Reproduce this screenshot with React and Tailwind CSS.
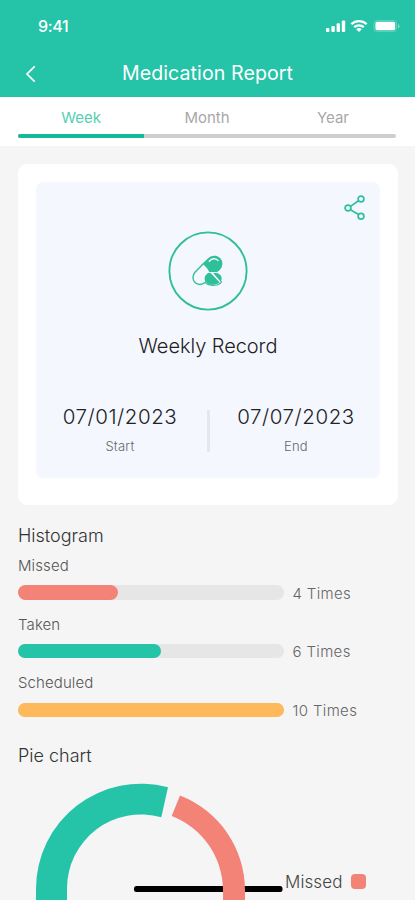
// App.jsx
import React from "react";

const tabs = ["Week", "Month", "Year"];

// fill is the width of the coloured part, in px, out of 266
const bars = [
  { label: "Missed", value: "4 Times", fill: 100, color: "bg-[#f38277]" },
  { label: "Taken", value: "6 Times", fill: 143, color: "bg-[#25c3a8]" },
  { label: "Scheduled", value: "10 Times", fill: 266, color: "bg-[#fdb95b]" },
];

function StatusBar() {
  return (
    <div className="flex h-[52px] items-center justify-between pl-[38px] pr-[14.5px] text-white">
      <span className="text-[16px] font-medium leading-none tracking-[-0.3px]">9:41</span>
      <svg width="76" height="16" viewBox="0 0 76 16" fill="currentColor">
        {/* signal */}
        <rect x="1" y="10" width="3.4" height="4" rx="1" />
        <rect x="6.4" y="8" width="3.4" height="6" rx="1" />
        <rect x="11.6" y="5.2" width="3.4" height="8.8" rx="1" />
        <rect x="16.8" y="2.4" width="3.4" height="11.6" rx="1" />
        {/* wifi */}
        <g fill="none" stroke="currentColor" strokeWidth="2.3">
          <path d="M26.3 6.2a11.2 11.2 0 0 1 15.4 0" />
          <path d="M29.2 9.2a7 7 0 0 1 9.6 0" />
        </g>
        <path d="M31.2 11.2a4.2 4.2 0 0 1 5.6 0L34 14z" />
        {/* battery */}
        <rect x="48.9" y="2.4" width="22.6" height="11.2" rx="3" fill="none" stroke="currentColor" strokeOpacity="0.25" />
        <rect x="50.4" y="3.8" width="19.8" height="8.4" rx="1.6" />
        <path d="M73 6v4.4a2.4 2.4 0 0 0 0-4.4z" opacity="0.45" />
      </svg>
    </div>
  );
}

function Header() {
  return (
    <header className="h-[97px] bg-[#25c3a8]">
      <StatusBar />
      <div className="flex h-[44px] items-center px-[24px] text-white">
        <svg width="14" height="18" viewBox="0 0 14 18" fill="none" stroke="currentColor" strokeWidth="1.7">
          <path d="M10.7 1.3 3 9l7.7 7.7" />
        </svg>
        <h1 className="flex-1 pr-[14px] text-center text-[19.6px] font-normal leading-none tracking-[0.08px]">
          Medication Report
        </h1>
      </div>
    </header>
  );
}

function Tabs() {
  return (
    <nav className="h-[49px] bg-white px-[18px]">
      <div className="grid h-[36.5px] w-[378px] grid-cols-3 pt-[12px]">
        {tabs.map((tab, i) => (
          <span
            key={tab}
            className={`text-center text-[15px] leading-[18px] ${
              i === 0 ? "text-[#55cfb0]" : "text-[#a8a8a8]"
            }`}
          >
            {tab}
          </span>
        ))}
      </div>
      <div className="h-[4px] w-[378px] overflow-hidden rounded-full bg-[#cfcfcf]">
        <div className="h-full w-[126px] bg-[#16b999]" />
      </div>
    </nav>
  );
}

function ShareIcon() {
  return (
    <svg width="22" height="26" viewBox="0 0 22 26" fill="none" stroke="#2cc1a0" strokeWidth="1.7">
      <circle cx="4" cy="13" r="2.9" />
      <circle cx="17" cy="4" r="2.9" />
      <circle cx="17" cy="21.2" r="2.9" />
      <path d="M6.4 11.4 14.6 5.7M6.4 14.7l8.2 4.9" />
    </svg>
  );
}

function PillIcon() {
  return (
    <svg width="80" height="80" viewBox="0 0 80 80" fill="none">
      <circle cx="40" cy="40" r="38.6" stroke="#2fbf9b" strokeWidth="1.9" />
      {/* big capsule: outlined lower half, solid upper half */}
      <path
        d="M35.6 32.4 27 41.3c-2.600 3-2.700 7.200-.2 10 2.700 2.900 7.200 3 10.200.3l1.600-1.600"
        stroke="#2fbf9b"
        strokeWidth="1.4"
      />
      <path
        d="M34.600 32.600l5.800-5.500c3.200-3 8.200-3.300 11.400-.4 3.300 3 3.500 7.900.7 11.200-1 1.200-2 2.200-3.400 3.100h-7.800l-2.300-3.700z"
        fill="#2fbf9b"
      />
      <path d="M41.300 30.200c2.300-2.900 5.900-3.300 8.700-.8" stroke="#f5f7ff" strokeWidth="1.400" strokeLinecap="round" />
      {/* tablet, split across */}
      <path d="M39.300 42.400c1.300-.8 2.900-.7 4.100.3l8.200 8.900c-3.600 2.600-8.700 2.700-12.300.6-3.300-2.200-3.800-6.900 0-9.800z" fill="#2fbf9b" />
      <path d="M45.300 42.300c3.700-1 7.800.8 8.300 4.400.2 1.700-.1 3-.9 4.100z" fill="#2fbf9b" />
      <path d="M37.600 52.300c3.600 2.500 10.700 2.700 14.200.4 1-.6 1.500-1.400 1.900-2.400" stroke="#2fbf9b" strokeWidth="1.300" />
    </svg>
  );
}

function DateBlock({ date, label }) {
  return (
    <div className="w-[130px] text-center">
      <p className="whitespace-nowrap text-[20.5px] font-light leading-[24px] tracking-[0.55px] text-[#222]">{date}</p>
      <p className="mt-[9px] text-[13px] font-light leading-[16px] tracking-[0.2px] text-[#666]">{label}</p>
    </div>
  );
}

function RecordCard() {
  return (
    <section className="mt-[18px] h-[341px] w-[380px] rounded-[9px] bg-white p-[18px]">
      <div className="flex h-[296px] flex-col items-center rounded-[7px] bg-[#f5f7ff]">
        <div className="mr-[14px] mt-[12.500px] h-[26px] self-end">
          <ShareIcon />
        </div>
        <div className="mt-[10px] h-[80px]">
          <PillIcon />
        </div>
        <h2 className="mt-[23.500px] text-[20px] font-light leading-[24px] tracking-[-0.05px] text-[#222]">
          Weekly Record
        </h2>
        <div className="mt-[47px] flex w-full items-start justify-between px-[19px]">
          <DateBlock date="07/01/2023" label="Start" />
          <div className="mt-[5px] h-[42px] w-[3px] bg-[#e6e6ef]" />
          <DateBlock date="07/07/2023" label="End" />
        </div>
      </div>
    </section>
  );
}

function Histogram() {
  return (
    <section className="mt-[19px]">
      <h3 className="text-[18px] font-light leading-[24px] text-[#333]">Histogram</h3>
      <div className="mt-[8px]">
        {bars.map((bar) => (
          <div key={bar.label} className="h-[58.7px]">
            <p className="text-[15px] font-light leading-[20px] tracking-[0.1px] text-[#555]">{bar.label}</p>
            <div className="mt-[9px] flex h-[15px] items-center">
              <div className="h-[14.5px] w-[266px] rounded-full bg-[#e6e6e6]">
                <div className={`h-full rounded-full ${bar.color}`} style={{ width: bar.fill }} />
              </div>
              <span className="ml-[8.5px] mt-[2px] text-[15px] font-light leading-[18px] tracking-[0.35px] text-[#666]">
                {bar.value}
              </span>
            </div>
          </div>
        ))}
      </div>
    </section>
  );
}

function PieChart() {
  return (
    <section className="mt-[12px]">
      <h3 className="text-[18px] font-light leading-[24px] text-[#333]">Pie chart</h3>
      <div className="mt-[14px] flex items-start">
        {/* the home indicator sits under the ring */}
        <svg className="-ml-[18px]" width="284" height="118" viewBox="0 782 284 118">
          <rect x="134" y="886" width="148.5" height="6" rx="2.5" fill="#000" />
          <path d="M168 787.3A105 105 0 0 0 36 889v20h31v-20A74 74 0 0 1 161.3 817.3z" fill="#25c3a8" />
          <path d="M180 795.5A102 102 0 0 1 245 890v20h-22v-20A80 80 0 0 0 171.7 816z" fill="#f38277" />
        </svg>
        <div className="mt-[88.5px] flex items-center">
          <span className="ml-[1px] text-[17px] font-light leading-[22px] tracking-[0.1px] text-[#444]">Missed</span>
          <span className="ml-[8.5px] h-[14.5px] w-[14.5px] rounded-[4px] bg-[#f38277]" />
        </div>
      </div>
    </section>
  );
}

export default function App() {
  return (
    <div className="h-[900px] w-[415px] overflow-hidden bg-[#f5f5f5] font-['Inter','Liberation_Sans',sans-serif]">
      <Header />
      <Tabs />
      <main className="px-[18px]">
        <RecordCard />
        <Histogram />
        <PieChart />
      </main>
    </div>
  );
}
